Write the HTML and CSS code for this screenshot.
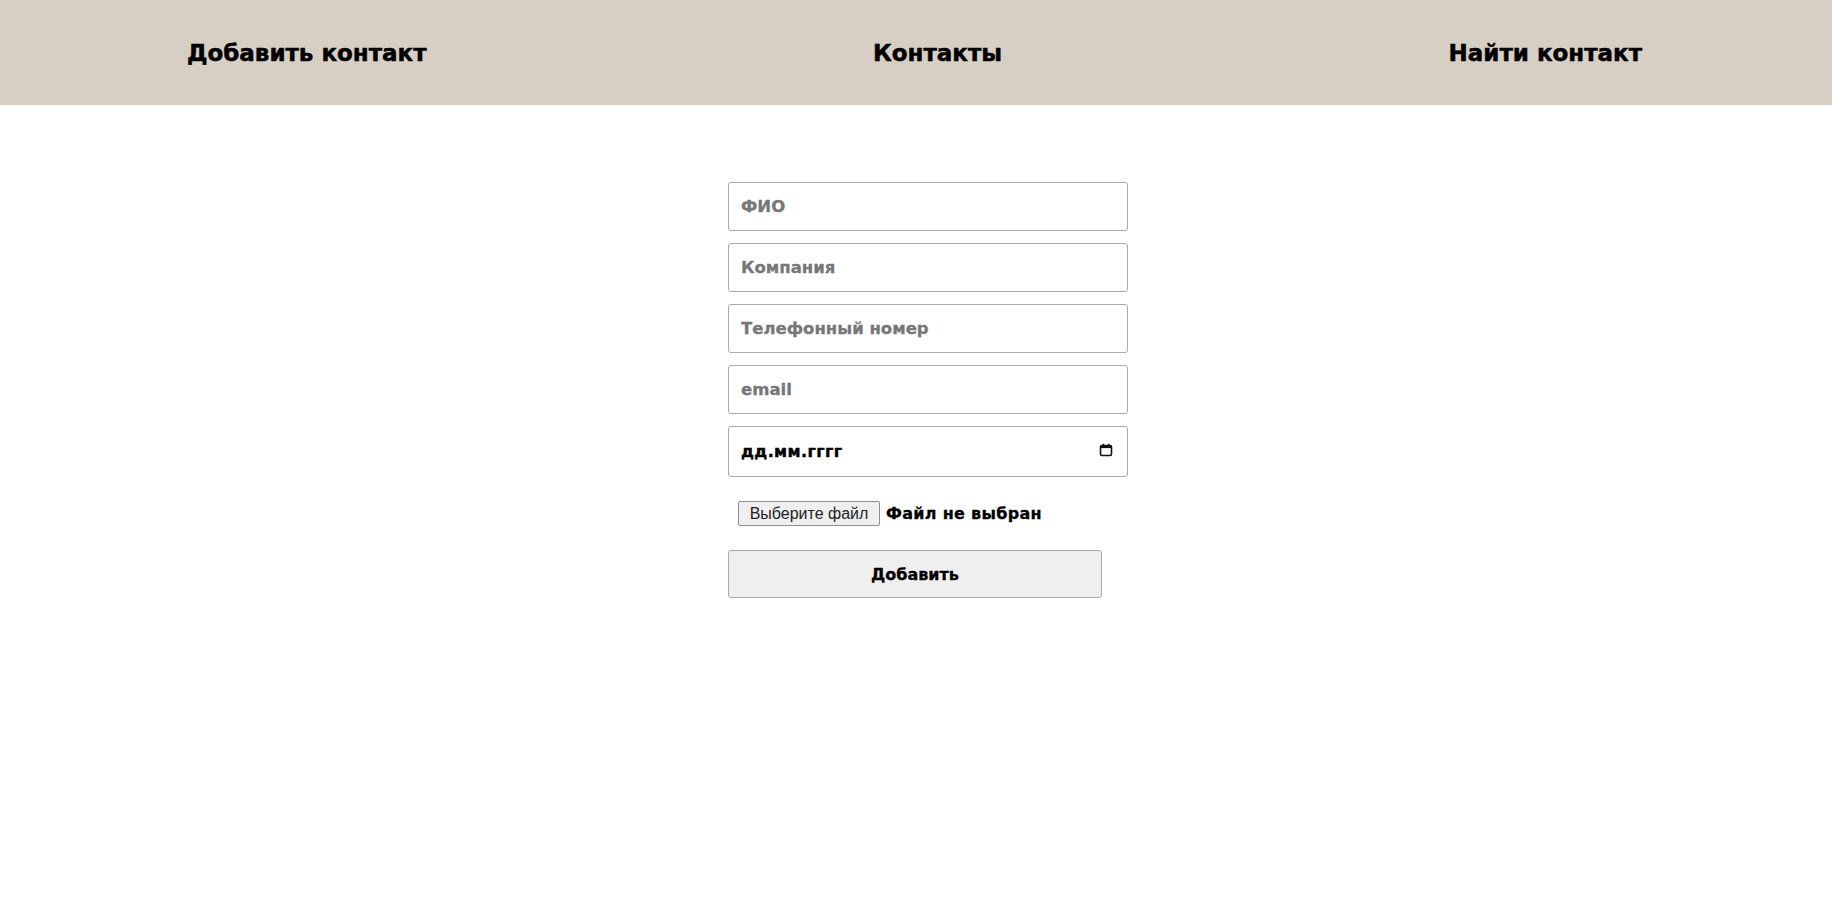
FILE: index.html
```html
<!DOCTYPE html>
<html lang="ru">
<head>
<meta charset="utf-8">
<title>Контакты</title>
<link rel="stylesheet" href="styles.css">
</head>
<body>
<header class="topbar">
  <nav class="nav">
    <a class="nav-link" href="#">Добавить контакт</a>
    <a class="nav-link" href="#">Контакты</a>
    <a class="nav-link" href="#">Найти контакт</a>
  </nav>
</header>
<main class="main">
  <form class="contact-form">
    <input class="field" type="text" placeholder="ФИО">
    <input class="field" type="text" placeholder="Компания">
    <input class="field" type="text" placeholder="Телефонный номер">
    <input class="field" type="text" placeholder="email">
    <div class="field date-field">
      <span class="date-text">дд.мм.гггг</span>
      <svg class="cal-icon" width="14" height="14" viewBox="0 0 14 14" aria-hidden="true">
        <rect x="1.5" y="2.5" width="11" height="10" rx="1.5" fill="none" stroke="#111" stroke-width="1.6"/>
        <rect x="1.5" y="2.5" width="11" height="2.6" fill="#111"/>
        <rect x="3.5" y="0.8" width="1.6" height="2.4" fill="#111"/>
        <rect x="8.9" y="0.8" width="1.6" height="2.4" fill="#111"/>
      </svg>
    </div>
    <div class="file-row">
      <button type="button" class="file-btn">Выберите файл</button>
      <span class="file-status">Файл не выбран</span>
    </div>
    <button type="button" class="submit-btn">Добавить</button>
  </form>
</main>
</body>
</html>
```

FILE: styles.css
```css
* { box-sizing: border-box; }
html, body { margin: 0; padding: 0; background: #fff; }
body { font-family: "Liberation Sans", Arial, sans-serif; color: #000; }

.topbar {
  background: #d8cfc4;
  height: 105px;
}
.nav {
  height: 100%;
  display: flex;
  align-items: center;
  justify-content: space-between;
  padding: 0 190px 0 187px;
}
.nav-link {
  color: #000;
  text-decoration: none;
  font-family: "DejaVu Sans", "Liberation Sans", sans-serif;
  font-weight: 700;
  font-size: 23px;
  -webkit-text-stroke: 0.5px #000;
}

.main {
  padding-top: 77px;
}
.contact-form {
  width: 400px;
  margin-left: 728px;
  display: flex;
  flex-direction: column;
  align-items: flex-start;
}
.field {
  width: 400px;
  height: 49px;
  margin: 0 0 12px 0;
  padding: 0 12px;
  border: 1.5px solid #a9a9a9;
  border-radius: 3px;
  font-family: "DejaVu Sans", "Liberation Sans", sans-serif;
  font-size: 16.5px;
  font-weight: 700;
  color: #000;
  background: #fff;
  outline: none;
}
.field::placeholder {
  color: #777;
  -webkit-text-stroke: 0.3px #777;
}
.date-field {
  height: 51px;
  display: flex;
  align-items: center;
  justify-content: space-between;
  padding: 0 14px 0 12px;
  margin-bottom: 24px;
}
.date-text {
  font-size: 16px;
  font-weight: 700;
  letter-spacing: 0.4px;
  -webkit-text-stroke: 0.4px #000;
}
.cal-icon { display: block; margin-top: -3px; }

.file-row {
  display: flex;
  align-items: center;
  margin-left: 10px;
  height: 25px;
  margin-bottom: 24px;
}
.file-btn {
  height: 25px;
  width: 142px;
  padding: 0;
  background: #efefef;
  border: 1px solid #8f8f8f;
  border-radius: 2px;
  font-family: "Liberation Sans", Arial, sans-serif;
  font-size: 16px;
  color: #222;
}
.file-status {
  margin-left: 6px;
  font-family: "DejaVu Sans", "Liberation Sans", sans-serif;
  font-size: 16px;
  font-weight: 700;
  letter-spacing: 0.3px;
  -webkit-text-stroke: 0.3px #000;
}
.submit-btn {
  width: 374px;
  height: 48px;
  background: #efefef;
  border: 1.5px solid #a9a9a9;
  border-radius: 3px;
  font-family: "DejaVu Sans", "Liberation Sans", sans-serif;
  font-size: 16px;
  font-weight: 700;
  color: #000;
  -webkit-text-stroke: 0.3px #000;
}
```
